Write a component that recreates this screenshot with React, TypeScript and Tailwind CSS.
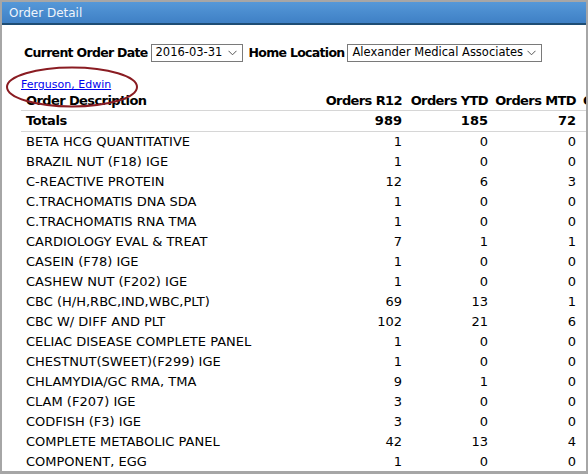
import React from "react";

const rows: [string, number, number, number][] = [
  ["BETA HCG QUANTITATIVE", 1, 0, 0],
  ["BRAZIL NUT (F18) IGE", 1, 0, 0],
  ["C-REACTIVE PROTEIN", 12, 6, 3],
  ["C.TRACHOMATIS DNA SDA", 1, 0, 0],
  ["C.TRACHOMATIS RNA TMA", 1, 0, 0],
  ["CARDIOLOGY EVAL & TREAT", 7, 1, 1],
  ["CASEIN (F78) IGE", 1, 0, 0],
  ["CASHEW NUT (F202) IGE", 1, 0, 0],
  ["CBC (H/H,RBC,IND,WBC,PLT)", 69, 13, 1],
  ["CBC W/ DIFF AND PLT", 102, 21, 6],
  ["CELIAC DISEASE COMPLETE PANEL", 1, 0, 0],
  ["CHESTNUT(SWEET)(F299) IGE", 1, 0, 0],
  ["CHLAMYDIA/GC RMA, TMA", 9, 1, 0],
  ["CLAM (F207) IGE", 3, 0, 0],
  ["CODFISH (F3) IGE", 3, 0, 0],
  ["COMPLETE METABOLIC PANEL", 42, 13, 4],
  ["COMPONENT, EGG", 1, 0, 0],
];

const Chevron = () => (
  <svg width="9" height="6" viewBox="0 0 9 6" className="shrink-0">
    <path d="M0.5 0.8 L4.5 4.8 L8.5 0.8" fill="none" stroke="#555" strokeWidth="1" />
  </svg>
);

const gridCols = "grid grid-cols-[300px_86px_86px_88px_120px]";

export default function App() {
  return (
    <div
      className="w-[588px] h-[474px] overflow-hidden bg-white border-l-2 border-t-2 border-r-2 border-b-[3px] border-[#a6a6a6] flex flex-col text-black"
      style={{ fontFamily: '"DejaVu Sans", Verdana, sans-serif' }}
    >
      <div className="h-[23px] shrink-0 bg-gradient-to-b from-[#5598d8] to-[#3f80c5] border-b-2 border-[#1e4d74] flex items-center pl-[7px] text-[12px] text-[#eef4fb]">
        Order Detail
      </div>
      <div className="relative flex-1 overflow-hidden">
        <div className="pt-[18px] pl-[22px] h-[38px] flex items-center gap-[3px] whitespace-nowrap">
          <span className="font-bold text-[12.5px] tracking-[-0.7px]">Current Order Date</span>
          <div className="h-[18px] w-[92px] shrink-0 border border-[#7a7a7a] flex items-center justify-between pl-[4px] pr-[5px] text-[11.5px]">
            <span>2016-03-31</span>
            <Chevron />
          </div>
          <span className="font-bold ml-[3px] text-[12.5px] tracking-[-0.7px]">Home Location</span>
          <div className="h-[18px] w-[195px] shrink-0 border border-[#7a7a7a] flex items-center justify-between pl-[4px] pr-[5px] text-[11.5px]">
            <span>Alexander Medical Associates</span>
            <Chevron />
          </div>
        </div>
        <div className="pl-[19px] pt-[15px] h-[28px] leading-[13px] text-[11px]">
          <a href="#" className="text-[#0000ee] underline">Ferguson, Edwin</a>
        </div>
        <div className="ml-[19px] text-[13px]">
          <div className={`${gridCols} h-[20px] items-center font-bold tracking-[-0.6px] border-b border-[#d6d6d6]`}>
            <div className="pl-[5px]">Order Description</div>
            <div className="text-right pr-[5px] whitespace-nowrap">Orders R12</div>
            <div className="text-right pr-[5px] whitespace-nowrap">Orders YTD</div>
            <div className="text-right pr-[5px] whitespace-nowrap">Orders MTD</div>
            <div className="pl-[2px] whitespace-nowrap">Orders WTD</div>
          </div>
          <div className={`${gridCols} h-[21px] items-center font-bold border-b border-[#d6d6d6]`}>
            <div className="pl-[5px] tracking-[-0.4px]">Totals</div>
            <div className="text-right pr-[5px]">989</div>
            <div className="text-right pr-[5px]">185</div>
            <div className="text-right pr-[5px]">72</div>
            <div />
          </div>
          {rows.map(([name, a, b, c]) => (
            <div key={name} className={`${gridCols} h-[20px] items-center`}>
              <div className="pl-[5px] whitespace-nowrap">{name}</div>
              <div className="text-right pr-[5px]">{a}</div>
              <div className="text-right pr-[5px]">{b}</div>
              <div className="text-right pr-[5px]">{c}</div>
              <div />
            </div>
          ))}
        </div>
        <svg className="absolute left-0 top-0 pointer-events-none" width="160" height="100">
          <ellipse cx="70" cy="62" rx="65" ry="19.5" fill="none" stroke="#8a1c22" strokeWidth="2" />
        </svg>
      </div>
    </div>
  );
}
